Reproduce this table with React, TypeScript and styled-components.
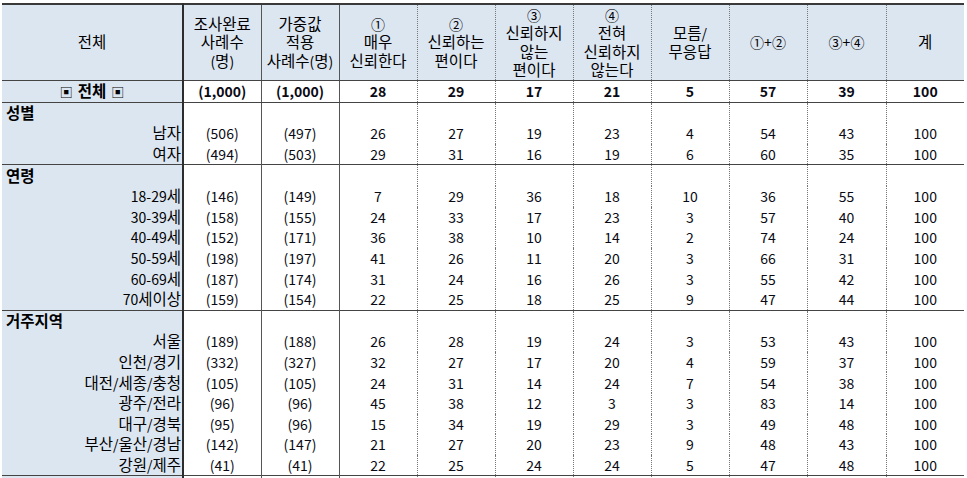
import React from "react";
import styled, { createGlobalStyle } from "styled-components";

const Global = createGlobalStyle`
  html, body { margin: 0; padding: 0; background: #fff; overflow: hidden; }
  body { font-family: "Noto Sans CJK KR", "Noto Sans", sans-serif; color: #000; }
`;

const Page = styled.div`
  padding: 3px 0 0 2px;
  width: 967px;
  height: 478px;
  box-sizing: border-box;
  overflow: hidden;
`;

const Table = styled.table`
  border-collapse: collapse;
  table-layout: fixed;
  width: 962px;
  font-size: 14px;
  border-top: 2px solid #3a3a3a;
`;

const Ko = styled.span`
  font-size: 15.5px;
  line-height: 0;
`;

type Edge = "solid" | "dark" | "dotted" | undefined;

const edgeBorder = (e: Edge) =>
  e === "dark"
    ? "2px solid #2d2d2d"
    : e === "solid"
    ? "1px solid #555"
    : e === "dotted"
    ? "1px dotted #777"
    : "none";

const HeadCell = styled.th<{ $edge?: Edge }>`
  background: #dce6f1;
  font-weight: 400;
  line-height: 18.5px;
  height: 75px;
  padding: 0;
  text-align: center;
  vertical-align: middle;
  white-space: nowrap;
  border-bottom: 1px solid #444;
  border-left: ${(p) => edgeBorder(p.$edge)};
`;

const TotalLabel = styled.td`
  background: #dce6f1;
  font-weight: 700;
  text-align: center;
  height: 19px;
  padding: 0;
  line-height: 19px;
  border-bottom: 1px solid #444;
`;

const Mark = styled.span`
  font-weight: 400;
  font-size: 13px;
  line-height: 0;
  margin: 0 5px;
`;

const ROW = "20.6px";

const Cell = styled.td<{ $edge?: Edge; $bold?: boolean; $sep?: boolean }>`
  text-align: center;
  padding: 0;
  height: ${ROW};
  line-height: 18px;
  font-weight: ${(p) => (p.$bold ? 700 : 400)};
  color: #0a0a14;
  border-left: ${(p) => edgeBorder(p.$edge)};
  border-bottom: ${(p) => (p.$sep ? "1px solid #444" : "none")};
`;

const GroupLabel = styled.td`
  background: #dce6f1;
  font-weight: 700;
  text-align: left;
  padding: 0 0 0 4px;
  height: ${ROW};
  line-height: 18px;
`;

const ItemLabel = styled.td`
  background: #dce6f1;
  text-align: right;
  padding: 0 1px 0 0;
  height: ${ROW};
  line-height: 18px;
  white-space: nowrap;
`;

const GroupRow = styled.tr`
  & > td {
    border-top: 1px solid #444;
  }
`;

const K = ({ t }: { t: string }) => (
  <>
    {t.split(/([\uAC00-\uD7A3]+)/).map((part, i) =>
      /[\uAC00-\uD7A3]/.test(part) ? <Ko key={i}>{part}</Ko> : <React.Fragment key={i}>{part}</React.Fragment>
    )}
  </>
);

const Lines = ({ lines }: { lines: string[] }) => (
  <>
    {lines.map((l, i) => (
      <React.Fragment key={i}>
        {i > 0 && <br />}
        <K t={l} />
      </React.Fragment>
    ))}
  </>
);

const widths = [181, 78, 78, 78, 78, 78, 78, 78, 78, 79, 78];
const edges: Edge[] = ["dark", "solid", "solid", "dotted", "dotted", "dotted", "dotted", "dotted", "dotted", "dotted"];

const headers: string[][] = [
  ["조사완료", "사례수", "(명)"],
  ["가중값", "적용", "사례수(명)"],
  ["①", "매우", "신뢰한다"],
  ["②", "신뢰하는", "편이다"],
  ["③", "신뢰하지", "않는", "편이다"],
  ["④", "전혀", "신뢰하지", "않는다"],
  ["모름/", "무응답"],
  ["①+②"],
  ["③+④"],
  ["계"],
];

type Row = [string, string, string, number, number, number, number, number, number, number, number];

const groups: { name: string; rows: Row[] }[] = [
  {
    name: "성별",
    rows: [
      ["남자", "(506)", "(497)", 26, 27, 19, 23, 4, 54, 43, 100],
      ["여자", "(494)", "(503)", 29, 31, 16, 19, 6, 60, 35, 100],
    ],
  },
  {
    name: "연령",
    rows: [
      ["18-29세", "(146)", "(149)", 7, 29, 36, 18, 10, 36, 55, 100],
      ["30-39세", "(158)", "(155)", 24, 33, 17, 23, 3, 57, 40, 100],
      ["40-49세", "(152)", "(171)", 36, 38, 10, 14, 2, 74, 24, 100],
      ["50-59세", "(198)", "(197)", 41, 26, 11, 20, 3, 66, 31, 100],
      ["60-69세", "(187)", "(174)", 31, 24, 16, 26, 3, 55, 42, 100],
      ["70세이상", "(159)", "(154)", 22, 25, 18, 25, 9, 47, 44, 100],
    ],
  },
  {
    name: "거주지역",
    rows: [
      ["서울", "(189)", "(188)", 26, 28, 19, 24, 3, 53, 43, 100],
      ["인천/경기", "(332)", "(327)", 32, 27, 17, 20, 4, 59, 37, 100],
      ["대전/세종/충청", "(105)", "(105)", 24, 31, 14, 24, 7, 54, 38, 100],
      ["광주/전라", "(96)", "(96)", 45, 38, 12, 3, 3, 83, 14, 100],
      ["대구/경북", "(95)", "(96)", 15, 34, 19, 29, 3, 49, 48, 100],
      ["부산/울산/경남", "(142)", "(147)", 21, 27, 20, 23, 9, 48, 43, 100],
      ["강원/제주", "(41)", "(41)", 22, 25, 24, 24, 5, 47, 48, 100],
    ],
  },
  { name: "", rows: [] },
];

const totals = ["(1,000)", "(1,000)", "28", "29", "17", "21", "5", "57", "39", "100"];

export default function App() {
  return (
    <Page>
      <Global />
      <Table>
        <colgroup>
          {widths.map((w, i) => (
            <col key={i} style={{ width: w }} />
          ))}
        </colgroup>
        <thead>
          <tr>
            <HeadCell>
              <K t="전체" />
            </HeadCell>
            {headers.map((h, i) => (
              <HeadCell key={i} $edge={edges[i]}>
                <Lines lines={h} />
              </HeadCell>
            ))}
          </tr>
        </thead>
        <tbody>
          <tr>
            <TotalLabel>
              <Mark>▣</Mark>
              <K t="전체" />
              <Mark>▣</Mark>
            </TotalLabel>
            {totals.map((t, i) => (
              <Cell key={i} $edge={edges[i]} $bold $sep>
                {t}
              </Cell>
            ))}
          </tr>
          {groups.map((g, gi) => (
            <React.Fragment key={g.name + gi}>
              <GroupRow>
                <GroupLabel>
                  <K t={g.name} />
                </GroupLabel>
                {edges.map((e, i) => (
                  <Cell key={i} $edge={e} />
                ))}
              </GroupRow>
              {g.rows.map((r) => (
                <tr key={r[0]}>
                  <ItemLabel>
                    <K t={r[0]} />
                  </ItemLabel>
                  {r.slice(1).map((v, i) => (
                    <Cell key={i} $edge={edges[i]}>
                      {v}
                    </Cell>
                  ))}
                </tr>
              ))}
            </React.Fragment>
          ))}
        </tbody>
      </Table>
    </Page>
  );
}
